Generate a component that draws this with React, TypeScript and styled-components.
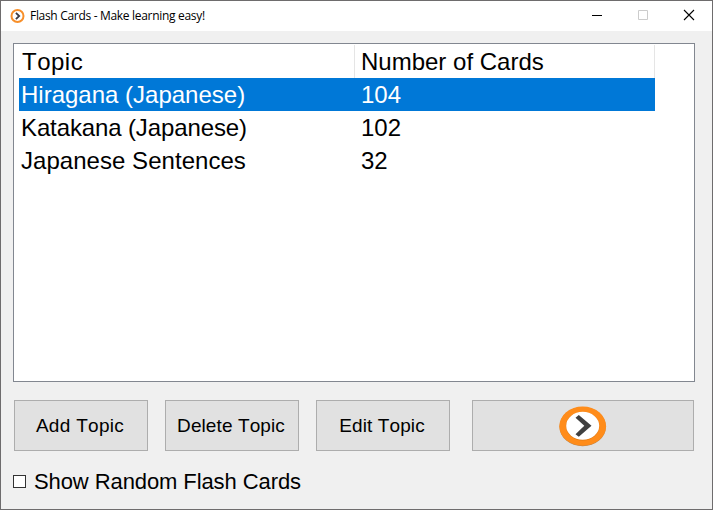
import React from "react";
import styled, { createGlobalStyle } from "styled-components";

const GlobalStyle = createGlobalStyle`
  * { box-sizing: border-box; }
  html, body { margin: 0; padding: 0; overflow: hidden; }
`;

const Window = styled.div`
  width: 713px;
  height: 510px;
  display: flex;
  flex-direction: column;
  background: #f0f0f0;
  border: 1px solid #6e6c6d;
  color: #000;
  font-family: "Liberation Sans", Arial, sans-serif;
  font-kerning: none;
  white-space: nowrap;
`;

const TitleBar = styled.header`
  height: 30px;
  flex: none;
  display: flex;
  align-items: center;
  padding-left: 9px;
  background: #fff;
`;

const Title = styled.span`
  flex: 1;
  margin-left: 5px;
  font: 12px/30px "Open Sans", "Noto Sans", sans-serif;
  letter-spacing: -0.31px;
`;

const Caption = styled.button`
  width: 46px;
  height: 30px;
  padding: 0;
  border: 0;
  background: transparent;
  display: block;

  svg { display: block; }
`;

const Content = styled.main`
  display: flex;
  flex-direction: column;
  padding: 12px 17px 0 12px;
`;

const ListView = styled.div`
  height: 339px;
  padding: 1px 5px;
  border: 1px solid #828790;
  background: #fff;
`;

const Row = styled.div<{ $selected?: boolean }>`
  display: grid;
  grid-template-columns: 336px 300px;
  width: 636px;
  height: 33px;
  font-size: 24px;
  line-height: 33px;
  background: ${(p) => (p.$selected ? "#0078d7" : "transparent")};
  color: ${(p) => (p.$selected ? "#fff" : "#000")};
`;

const HeaderCell = styled.div<{ $spacing?: number }>`
  padding-left: 3px;
  border-right: 1px solid #e5e5e5;
  letter-spacing: ${(p) => p.$spacing ?? 0}px;

  & + & { padding-left: 6px; }
`;

const Cell = styled.div<{ $spacing?: number }>`
  padding-left: 2px;
  letter-spacing: ${(p) => p.$spacing ?? 0}px;

  & + & { padding-left: 6px; }
`;

const Actions = styled.div`
  display: grid;
  grid-template-columns: 134px 134px 134px 222px;
  column-gap: 17px;
  margin: 18px 0 0 1px;
`;

const Button = styled.button<{ $primary?: boolean; $spacing?: number }>`
  height: 51px;
  margin: 0 ${(p) => (p.$primary ? -5 : 0)}px 0 ${(p) => (p.$primary ? 5 : 0)}px;
  padding: 0 ${(p) => (p.$primary ? 0 : 2)}px 0 0;
  display: flex;
  align-items: center;
  justify-content: center;
  border: 1px solid #adadad;
  background: #e1e1e1;
  color: #000;
  font: 19px "Liberation Sans", Arial, sans-serif;
  font-kerning: none;
  letter-spacing: ${(p) => p.$spacing ?? 0}px;
`;

const CheckLabel = styled.label`
  display: flex;
  align-items: center;
  height: 30px;
  margin-top: 15px;
  font-size: 22px;
  letter-spacing: -0.09px;
`;

const CheckBox = styled.input`
  appearance: none;
  width: 13px;
  height: 13px;
  margin: 0 8px 0 0;
  border: 1px solid #333;
  background: #fff;
`;

const CheckText = styled.span`
  padding-top: 2px;
`;

const topics = [
  { name: "Hiragana (Japanese)", cards: 104, spacing: 0 },
  { name: "Katakana (Japanese)", cards: 102, spacing: -0.12 },
  { name: "Japanese Sentences", cards: 32, spacing: 0.04 },
];

const SmallLogo = () => (
  <svg width="15" height="15" viewBox="0 0 15 15">
    <circle cx="7.5" cy="7" r="6" fill="#fff" stroke="#f78f2a" strokeWidth="2" />
    <path d="M5.9 3.8 9.2 7 5.9 10.2" fill="none" stroke="#3c3c46" strokeWidth="1.8" />
  </svg>
);

const NextLogo = () => (
  <svg width="48" height="42" viewBox="0 0 48 42">
    <ellipse cx="23.7" cy="21.7" rx="23.2" ry="19.6" fill="#b98550" />
    <ellipse cx="23.7" cy="21.2" rx="23.4" ry="19.6" fill="#ff8c1a" />
    <ellipse cx="23.7" cy="21.1" rx="16.8" ry="14.4" fill="#e27a12" />
    <ellipse cx="23.7" cy="20.8" rx="16.5" ry="14" fill="#fff" />
    <path d="M16.5 12.7 19.8 10 32.5 20.8 19.8 31.8 16.5 29.2 25.3 20.8Z" fill="#404040" />
  </svg>
);

export default function App() {
  return (
    <>
      <GlobalStyle />
      <Window>
        <TitleBar>
          <SmallLogo />
          <Title>Flash Cards - Make learning easy!</Title>
          <Caption aria-label="Minimize">
            <svg width="46" height="30"><path d="M18 14.5h10" stroke="#000" /></svg>
          </Caption>
          <Caption aria-label="Maximize" disabled>
            <svg width="46" height="30"><path d="M18.5 9.5h9v9h-9z" fill="none" stroke="#ccc" /></svg>
          </Caption>
          <Caption aria-label="Close">
            <svg width="46" height="30"><path d="m18 9 10 10m0-10L18 19" stroke="#000" strokeWidth="1.1" /></svg>
          </Caption>
        </TitleBar>
        <Content>
          <ListView>
            <Row>
              <HeaderCell $spacing={0.5}>Topic</HeaderCell>
              <HeaderCell>Number of Cards</HeaderCell>
            </Row>
            {topics.map((t, i) => (
              <Row key={t.name} $selected={i === 0}>
                <Cell $spacing={t.spacing}>{t.name}</Cell>
                <Cell>{t.cards}</Cell>
              </Row>
            ))}
          </ListView>
          <Actions>
            <Button $spacing={0.3}>Add Topic</Button>
            <Button $spacing={0.1}>Delete Topic</Button>
            <Button $spacing={0.1}>Edit Topic</Button>
            <Button $primary aria-label="Next"><NextLogo /></Button>
          </Actions>
          <CheckLabel>
            <CheckBox type="checkbox" />
            <CheckText>Show Random Flash Cards</CheckText>
          </CheckLabel>
        </Content>
      </Window>
    </>
  );
}
